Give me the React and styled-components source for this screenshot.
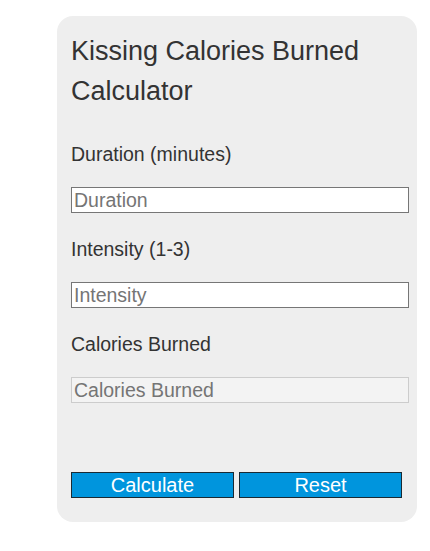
import styled, { createGlobalStyle } from 'styled-components';

const GlobalStyle = createGlobalStyle`
  body {
    margin: 0;
    background: #ffffff;
    font-family: "Liberation Sans", Arial, sans-serif;
  }
`;

const Page = styled.div`
  padding: 16px 0 28px 57px;
`;

const Card = styled.form`
  box-sizing: border-box;
  width: 360px;
  padding: 15px 14px 24px 14px;
  background: #eeeeee;
  border-radius: 16px;
  color: #333333;
`;

const Title = styled.h1`
  margin: 0;
  font-size: 27px;
  font-weight: 400;
  line-height: 40px;
`;

const Fields = styled.div`
  display: flex;
  flex-direction: column;
  margin-top: 32px;
`;

const Label = styled.label`
  display: block;
  font-size: 19.5px;
  line-height: 23px;
  margin-top: ${p => (p.$first ? '0' : '25px')};
`;

const Input = styled.input`
  box-sizing: border-box;
  width: 338px;
  height: 26px;
  margin-top: 21px;
  padding: 0 2px;
  font-family: "Liberation Sans", Arial, sans-serif;
  font-size: 19.5px;
  color: #333333;
  background: ${p => (p.readOnly ? '#f3f3f3' : '#ffffff')};
  border: 1px solid ${p => (p.readOnly ? '#cccccc' : '#767676')};
  border-radius: 0;
  outline: none;
  &::placeholder {
    color: #757575;
  }
`;

const Buttons = styled.div`
  display: flex;
  gap: 5px;
  margin-top: 69px;
`;

const Button = styled.button`
  box-sizing: border-box;
  width: 163px;
  height: 26px;
  padding: 0;
  font-family: "Liberation Sans", Arial, sans-serif;
  font-size: 20px;
  color: #ffffff;
  background: #0095dd;
  border: 1px solid #1a2a33;
  border-radius: 0;
  cursor: pointer;
`;

const App = () => (
  <>
    <GlobalStyle />
    <Page>
      <Card onSubmit={e => e.preventDefault()}>
        <Title>Kissing Calories Burned Calculator</Title>
        <Fields>
          <Label $first>Duration (minutes)</Label>
          <Input placeholder="Duration" />
          <Label>Intensity (1-3)</Label>
          <Input placeholder="Intensity" />
          <Label>Calories Burned</Label>
          <Input placeholder="Calories Burned" readOnly />
        </Fields>
        <Buttons>
          <Button type="button">Calculate</Button>
          <Button type="reset">Reset</Button>
        </Buttons>
      </Card>
    </Page>
  </>
);

export default App;
